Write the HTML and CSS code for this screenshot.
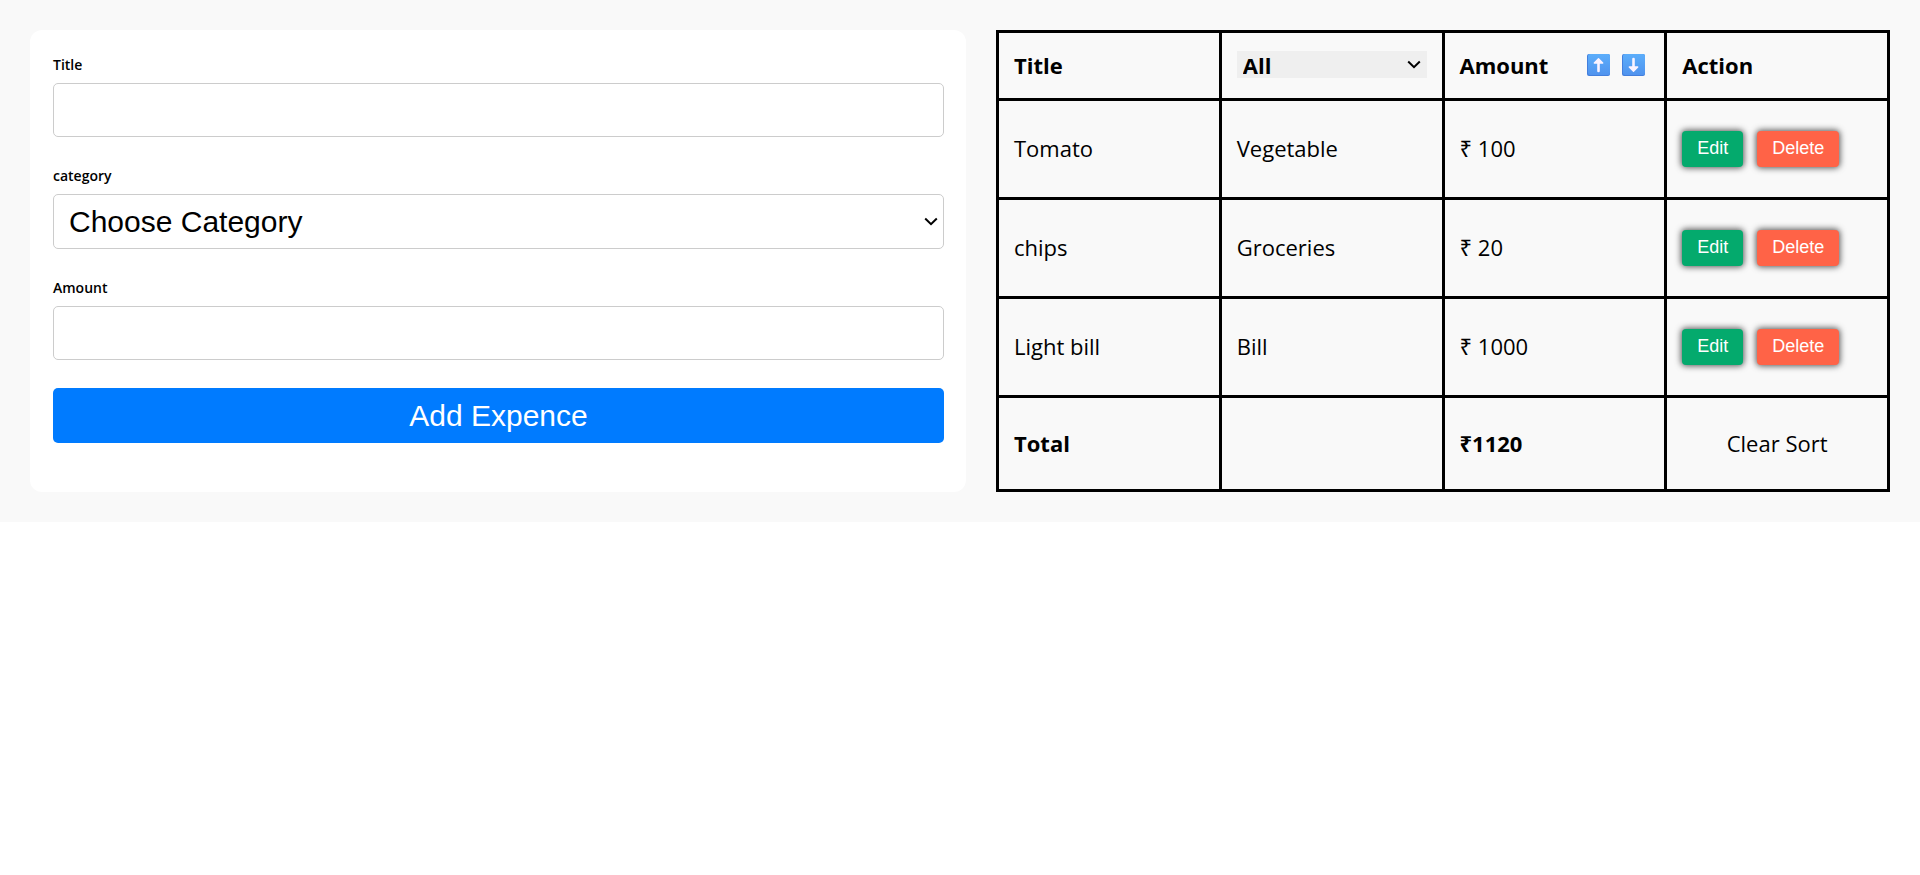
FILE: index.html
```html
<!DOCTYPE html>
<html lang="en">
<head>
<meta charset="utf-8">
<title>Expense Tracker</title>
<link rel="stylesheet" href="styles.css">
</head>
<body>
<main class="tracker">
  <form class="expense-form">
    <div class="field">
      <label for="title">Title</label>
      <input id="title" name="title" type="text">
    </div>
    <div class="field">
      <label for="category">category</label>
      <div class="select-wrap">
        <select id="category" name="category">
          <option>Choose Category</option>
          <option>Vegetable</option>
          <option>Groceries</option>
          <option>Bill</option>
        </select>
        <svg class="chevron" viewBox="0 0 14 9" width="14" height="9"><path d="M1.200 1.500 7 7.200 12.800 1.500" fill="none" stroke="#000" stroke-width="2"/></svg>
      </div>
    </div>
    <div class="field">
      <label for="amount">Amount</label>
      <input id="amount" name="amount" type="text">
    </div>
    <button class="add-button" type="submit">Add Expence</button>
  </form>

  <table class="expense-table">
    <thead>
      <tr class="head-row">
        <th>Title</th>
        <th>
          <div class="select-wrap">
            <select class="filter" aria-label="Filter by category">
              <option>All</option>
              <option>Vegetable</option>
              <option>Groceries</option>
              <option>Bill</option>
            </select>
            <svg class="chevron" viewBox="0 0 14 9" width="14" height="9"><path d="M1.200 1.500 7 7.200 12.800 1.500" fill="none" stroke="#000" stroke-width="2"/></svg>
          </div>
        </th>
        <th>
          <div class="amount-head">
            <span>Amount</span>
            <div class="sorters">
              <button class="sort" type="button" aria-label="Sort ascending">
                <svg viewBox="0 0 23 22" width="23" height="22">
                  <defs>
                    <linearGradient id="tile" x1="0" y1="0" x2="0" y2="1">
                      <stop offset="0" stop-color="#5caefb"/>
                      <stop offset="1" stop-color="#5093ee"/>
                    </linearGradient>
                  </defs>
                  <rect width="23" height="22" rx="2" fill="#437fdd"/>
                  <rect x="1" width="22" height="21" rx="2" fill="url(#tile)"/>
                  <path d="M11.500 17V7" fill="none" stroke="#fbf3ff" stroke-width="2.600" stroke-linecap="round"/>
                  <path d="M7.300 9 11.500 4.800 15.700 9Z" fill="#fbf3ff" stroke="#fbf3ff" stroke-width="1.400" stroke-linejoin="round"/>
                </svg>
              </button>
              <button class="sort" type="button" aria-label="Sort descending">
                <svg viewBox="0 0 23 22" width="23" height="22">
                  <rect width="23" height="22" rx="2" fill="#437fdd"/>
                  <rect x="1" width="22" height="21" rx="2" fill="url(#tile)"/>
                  <path d="M11.500 5V15" fill="none" stroke="#fbf3ff" stroke-width="2.600" stroke-linecap="round"/>
                  <path d="M7.300 13 11.500 17.200 15.700 13Z" fill="#fbf3ff" stroke="#fbf3ff" stroke-width="1.400" stroke-linejoin="round"/>
                </svg>
              </button>
            </div>
          </div>
        </th>
        <th>Action</th>
      </tr>
    </thead>
    <tbody>
      <tr>
        <td>Tomato</td>
        <td>Vegetable</td>
        <td>₹ 100</td>
        <td><div class="actions"><button class="action edit" type="button">Edit</button><button class="action delete" type="button">Delete</button></div></td>
      </tr>
      <tr>
        <td>chips</td>
        <td>Groceries</td>
        <td>₹ 20</td>
        <td><div class="actions"><button class="action edit" type="button">Edit</button><button class="action delete" type="button">Delete</button></div></td>
      </tr>
      <tr>
        <td>Light bill</td>
        <td>Bill</td>
        <td>₹ 1000</td>
        <td><div class="actions"><button class="action edit" type="button">Edit</button><button class="action delete" type="button">Delete</button></div></td>
      </tr>
    </tbody>
    <tfoot>
      <tr class="total-row">
        <th>Total</th>
        <td></td>
        <th>₹1120</th>
        <td><button class="clear-sort" type="button">Clear Sort</button></td>
      </tr>
    </tfoot>
  </table>
</main>
</body>
</html>
```
FILE: styles.css
```css
* {
  box-sizing: border-box;
}

body {
  margin: 0;
  background: #fff;
  color: #000;
  font-family: "Open Sans", "Noto Sans", sans-serif;
  font-size: 22px;
  line-height: 28px;
}

.tracker {
  display: grid;
  grid-template-columns: 936fr 894fr;
  gap: 30px;
  padding: 30px;
  background: #f9f9f9;
}

.expense-form {
  padding: 25px 22px 19px 23px;
  border-radius: 12px;
  background: #fff;
}

.field {
  display: flex;
  flex-direction: column;
  gap: 8px;
  margin-bottom: 29px;
}

.field:nth-of-type(3) {
  margin-bottom: 28px;
}

.field label {
  font-size: 14px;
  font-weight: 600;
  line-height: 20px;
}

.field input,
.field select {
  width: 100%;
  height: 54px;
  padding: 0 15px;
  border: 1px solid #ccc;
  border-radius: 5px;
  background: #fff;
  color: #000;
  font-family: "Liberation Sans", Arial, sans-serif;
  font-size: 30px;
}

.field select {
  height: 55px;
}

.select-wrap {
  display: grid;
  align-items: center;
}

.select-wrap select,
.select-wrap .chevron {
  grid-area: 1 / 1;
}

.select-wrap select {
  appearance: none;
}

.chevron {
  justify-self: end;
  margin-right: 6px;
  pointer-events: none;
}

.add-button {
  display: block;
  width: 100%;
  height: 55px;
  padding: 0;
  border: 0;
  border-radius: 5px;
  background: #007bff;
  color: #fff;
  font-family: "Liberation Sans", Arial, sans-serif;
  font-size: 30px;
}

.expense-table {
  width: 100%;
  border-collapse: collapse;
  table-layout: fixed;
}

.expense-table th,
.expense-table td {
  height: 99px;
  padding: 0 15px 2px;
  border: 3px solid #000;
  text-align: left;
  vertical-align: middle;
}

.expense-table .head-row th {
  height: 68px;
}

.expense-table .total-row th,
.expense-table .total-row td {
  height: 94px;
}

.filter {
  display: block;
  width: 100%;
  height: 27px;
  padding: 0 6px;
  border: 0;
  border-radius: 0;
  background: #efefef;
  color: #000;
  font: inherit;
  line-height: 24px;
}

.amount-head {
  display: flex;
  align-items: center;
  justify-content: space-between;
  padding-right: 4px;
}

.sorters {
  display: flex;
  gap: 12px;
}

.sort {
  display: block;
  padding: 0;
  border: 0;
  background: none;
}

.sort svg {
  display: block;
}

.actions {
  display: flex;
  gap: 14px;
  padding-top: 2px;
}

.action {
  height: 36px;
  padding: 0 15px 2px;
  border: 0;
  border-radius: 4px;
  box-shadow: 0 0 6px 1px #555;
  color: #fff;
  font-family: "Liberation Sans", Arial, sans-serif;
  font-size: 18px;
}

.edit {
  background: #04aa6d;
}

.delete {
  background: #ff6347;
}

.clear-sort {
  display: block;
  width: 100%;
  padding: 0;
  border: 0;
  background: none;
  color: inherit;
  font: inherit;
  text-align: center;
}
```
